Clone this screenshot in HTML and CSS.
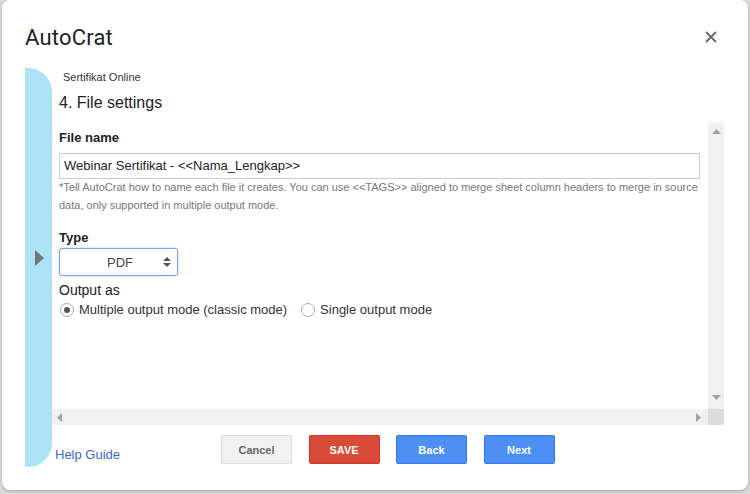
FILE: index.html
```html
<!DOCTYPE html>
<html>
<head>
<meta charset="utf-8">
<link rel="stylesheet" href="styles.css">
</head>
<body>
<div class="dialog">
  <div class="header">
    <h1 class="title">AutoCrat</h1>
    <button class="close" aria-label="Close">
      <svg width="12" height="12" viewBox="0 0 12 12"><path d="M1 1L11 11M11 1L1 11" stroke="#666" stroke-width="1.8" fill="none"/></svg>
    </button>
  </div>
  <div class="main">
    <div class="sidebar">
      <svg class="arrow" width="9" height="16" viewBox="0 0 9 16"><path d="M0 0L9 8L0 16Z" fill="#757575"/></svg>
    </div>
    <div class="column">
      <div class="crumb">Sertifikat Online</div>
      <div class="step">4. File settings</div>
      <div class="scrollbox">
        <div class="content">
          <div class="label">File name</div>
          <div class="input">Webinar Sertifikat - &lt;&lt;Nama_Lengkap&gt;&gt;</div>
          <div class="help">*Tell AutoCrat how to name each file it creates. You can use &lt;&lt;TAGS&gt;&gt; aligned to merge sheet column headers to merge in source data, only supported in multiple output mode.</div>
          <div class="label type">Type</div>
          <div class="select">
            <span>PDF</span>
            <svg class="updown" width="8" height="12" viewBox="0 0 8 12"><path d="M0 5L4 1L8 5Z M0 7L4 11L8 7Z" fill="#555"/></svg>
          </div>
          <div class="sublabel">Output as</div>
          <div class="radios">
            <label class="radio"><span class="dot checked"></span>Multiple output mode (classic mode)</label>
            <label class="radio"><span class="dot"></span>Single output mode</label>
          </div>
        </div>
        <div class="vbar">
          <svg width="9" height="5" viewBox="0 0 9 5"><path d="M0 5L4.5 0L9 5Z" fill="#a3a3a3"/></svg>
          <svg width="9" height="5" viewBox="0 0 9 5"><path d="M0 0L4.5 5L9 0Z" fill="#a3a3a3"/></svg>
        </div>
        <div class="hbar">
          <svg width="5" height="9" viewBox="0 0 5 9"><path d="M5 0L0 4.5L5 9Z" fill="#a3a3a3"/></svg>
          <svg width="5" height="9" viewBox="0 0 5 9"><path d="M0 0L5 4.5L0 9Z" fill="#a3a3a3"/></svg>
        </div>
        <div class="corner"></div>
      </div>
      <div class="footer">
        <a class="helplink" href="#">Help Guide</a>
        <div class="buttons">
          <button class="btn cancel">Cancel</button>
          <button class="btn save">SAVE</button>
          <button class="btn blue">Back</button>
          <button class="btn blue">Next</button>
        </div>
      </div>
    </div>
  </div>
</div>
</body>
</html>
```
FILE: styles.css
```css
html, body {
  margin: 0;
  padding: 0;
}
body {
  width: 750px;
  height: 494px;
  background: #dadada;
  font-family: "Liberation Sans", Arial, sans-serif;
  overflow: hidden;
}
.dialog {
  box-sizing: border-box;
  width: 746px;
  height: 490px;
  margin-left: 2px;
  background: #fff;
  border-radius: 8px;
  box-shadow: 0 1px 3px rgba(0,0,0,0.25);
  display: flex;
  flex-direction: column;
}
.header {
  height: 68px;
  display: flex;
  align-items: flex-start;
  padding-left: 23px;
  padding-right: 31px;
}
.title {
  margin: 24px 0 0 0;
  font-family: Roboto, "Open Sans", sans-serif;
  font-weight: 400;
  font-size: 22px;
  line-height: 28px;
  color: #222;
  letter-spacing: 0.2px;
}
.close {
  margin-left: auto;
  margin-top: 31px;
  padding: 0;
  border: 0;
  background: none;
  width: 12px;
  height: 12px;
  display: flex;
}
.main {
  display: flex;
  height: 399px;
  padding-left: 23px;
}
.sidebar {
  width: 27px;
  flex: none;
  background: #aee2f6;
  border-radius: 0 24px 24px 0;
  display: flex;
  align-items: center;
  justify-content: center;
}
.arrow {
  margin-left: 2px;
  margin-bottom: 20px;
}
.column {
  width: 672px;
  display: flex;
  flex-direction: column;
}
.crumb {
  margin-top: 3px;
  padding-left: 11px;
  font-size: 11px;
  line-height: 13px;
  color: #333;
}
.step {
  margin-top: 9px;
  padding-left: 7px;
  font-size: 16px;
  line-height: 19px;
  color: #222;
}
.scrollbox {
  margin-top: 10px;
  height: 303px;
  display: grid;
  grid-template-columns: 656px 16px;
  grid-template-rows: 287px 16px;
}
.content {
  padding: 8px 8px 0 7px;
  overflow: hidden;
}
.label {
  font-weight: bold;
  font-size: 13px;
  line-height: 16px;
  color: #222;
}
.input {
  box-sizing: border-box;
  margin-top: 7px;
  width: 641px;
  height: 26px;
  border: 1px solid #ccc;
  padding-left: 4px;
  font-size: 13px;
  line-height: 24px;
  color: #222;
}
.help {
  margin-top: -1px;
  font-size: 11px;
  line-height: 18px;
  color: #777;
  width: 645px;
}
.type {
  margin-top: 16px;
}
.select {
  box-sizing: border-box;
  margin-top: 2px;
  width: 119px;
  height: 28px;
  border: 1px solid #6fa5f5;
  border-radius: 3px;
  box-shadow: 0 0 2px rgba(77,144,254,0.6);
  display: flex;
  align-items: center;
  font-size: 13px;
  color: #444;
}
.select span {
  margin-left: 47px;
}
.updown {
  margin-left: auto;
  margin-right: 6px;
}
.sublabel {
  margin-top: 6px;
  font-size: 14px;
  line-height: 17px;
  color: #222;
}
.radios {
  margin-top: 3px;
  display: flex;
  align-items: center;
  font-size: 13px;
  line-height: 16px;
  color: #333;
}
.radio {
  display: flex;
  align-items: center;
}
.radio + .radio {
  margin-left: 13px;
}
.dot {
  box-sizing: border-box;
  width: 14px;
  height: 14px;
  margin-left: 1px;
  margin-right: 5px;
  border: 1px solid #aaa;
  border-radius: 50%;
  display: flex;
  align-items: center;
  justify-content: center;
  background: #fff;
}
.dot.checked::after {
  content: "";
  width: 6px;
  height: 6px;
  border-radius: 50%;
  background: #555;
}
.vbar {
  background: #f1f1f1;
  display: flex;
  flex-direction: column;
  align-items: center;
  justify-content: space-between;
  padding: 7px 0 9px 0;
}
.hbar {
  background: #f1f1f1;
  display: flex;
  align-items: center;
  justify-content: space-between;
  padding: 0 7px 0 5px;
}
.corner {
  background: #dcdcdc;
}
.footer {
  display: flex;
  padding-top: 10px;
  padding-left: 3px;
}
.helplink {
  width: 166px;
  margin-top: 12px;
  font-size: 13px;
  line-height: 16px;
  color: #3a67d8;
  text-decoration: none;
}
.buttons {
  display: flex;
  gap: 16.5px;
}
.btn {
  box-sizing: border-box;
  width: 71px;
  height: 29px;
  border-radius: 2px;
  font-family: "Liberation Sans", Arial, sans-serif;
  font-weight: bold;
  font-size: 11px;
  padding: 0;
}
.cancel {
  background: #f1f1f1;
  border: 1px solid #dcdcdc;
  color: #666;
}
.save {
  background: #d94a38;
  border: 1px solid #c53727;
  color: #fff;
}
.blue {
  background: #4d8ff4;
  border: 1px solid #3079ed;
  color: #fff;
}
```
